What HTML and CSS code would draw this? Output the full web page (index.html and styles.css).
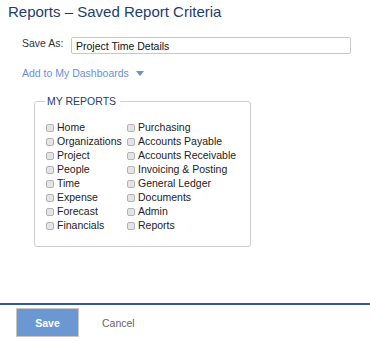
FILE: index.html
```html
<!DOCTYPE html>
<html lang="en">
<head>
    <meta charset="UTF-8">
    <title>Saved Report Criteria</title>
    <link rel="stylesheet" href="styles.css">
</head>
<body>
<div class="page">
    <h1 class="title">Reports – Saved Report Criteria</h1>

    <div class="save-row">
        <label class="save-label" for="report-name">Save As:</label>
        <input class="save-input" id="report-name" type="text" value="Project Time Details">
    </div>

    <a class="dash-link" href="#">Add to My Dashboards <span class="caret"></span></a>

    <fieldset class="reports">
        <legend>MY REPORTS</legend>
        <div class="report-cols">
            <div class="report-col first">
                <label><input type="checkbox"> Home</label>
                <label><input type="checkbox"> Organizations</label>
                <label><input type="checkbox"> Project</label>
                <label><input type="checkbox"> People</label>
                <label><input type="checkbox"> Time</label>
                <label><input type="checkbox"> Expense</label>
                <label><input type="checkbox"> Forecast</label>
                <label><input type="checkbox"> Financials</label>
            </div>
            <div class="report-col">
                <label><input type="checkbox"> Purchasing</label>
                <label><input type="checkbox"> Accounts Payable</label>
                <label><input type="checkbox"> Accounts Receivable</label>
                <label><input type="checkbox"> Invoicing &amp; Posting</label>
                <label><input type="checkbox"> General Ledger</label>
                <label><input type="checkbox"> Documents</label>
                <label><input type="checkbox"> Admin</label>
                <label><input type="checkbox"> Reports</label>
            </div>
        </div>
    </fieldset>
</div>

<div class="footer">
    <button class="btn-save">Save</button>
    <a class="btn-cancel" href="#">Cancel</a>
</div>
</body>
</html>
```

FILE: styles.css
```css
html, body {
    height: 100%;
}

body {
    margin: 0;
    font-family: 'Liberation Sans', Arial, sans-serif;
    font-size: 10.5px;
    color: #333;
    background-color: #fff;
    display: flex;
    flex-direction: column;
}

.page {
    padding: 2px 8px 0;
}

.title {
    margin: 0;
    font-size: 15px;
    line-height: 20px;
    font-weight: normal;
    color: #1d3d6b;
}

.save-row {
    display: flex;
    align-items: flex-start;
    margin-top: 15px;
    padding-left: 14px;
}

.save-label {
    width: 49px;
    line-height: 14px;
    margin-top: -1px;
    color: #333;
}

.save-input {
    box-sizing: border-box;
    width: 280px;
    height: 17px;
    margin: 0;
    padding: 0 4px;
    border: 1px solid #c8c8c8;
    border-radius: 2px;
    font-family: inherit;
    font-size: 10.5px;
    color: #111;
    outline: none;
}

.dash-link {
    display: inline-flex;
    align-items: center;
    margin-top: 12px;
    margin-left: 14px;
    line-height: 14px;
    color: #6b8fd8;
    text-decoration: none;
}

.caret {
    width: 0;
    height: 0;
    margin-left: 7px;
    margin-top: 1px;
    border-left: 4px solid transparent;
    border-right: 4px solid transparent;
    border-top: 5px solid #6b8fd8;
}

.reports {
    box-sizing: border-box;
    width: 217px;
    margin: 15px 0 0 26px;
    padding: 13px 0 14px 11px;
    border: 1px solid #cfcfcf;
    border-radius: 3px;
}

.reports legend {
    margin-left: -1px;
    padding: 0 4px 0 2px;
    line-height: 12px;
    color: #1d3d6b;
}

.report-cols {
    display: flex;
}

.report-col {
    display: flex;
    flex-direction: column;
}

.report-col.first {
    width: 81px;
}

.report-col label {
    display: flex;
    align-items: center;
    height: 14px;
    line-height: 14px;
    white-space: nowrap;
    color: #222;
}

.report-col input {
    appearance: none;
    -webkit-appearance: none;
    box-sizing: border-box;
    width: 8px;
    height: 8px;
    margin: 2px 3px 0 0;
    border: 1px solid #b3b3b3;
    border-radius: 2px;
    background-color: #e4e4e4;
}

.footer {
    margin-top: auto;
    display: flex;
    align-items: center;
    gap: 23px;
    padding: 3px 16px 4px;
    border-top: 2px solid #2e5a9a;
}

.btn-save {
    width: 63px;
    height: 29px;
    border: 1px solid #c6c6c6;
    background-color: #6b97d2;
    color: white;
    font-family: inherit;
    font-size: 10.5px;
    font-weight: bold;
    cursor: pointer;
}

.btn-cancel {
    color: #666;
    text-decoration: none;
}
```
